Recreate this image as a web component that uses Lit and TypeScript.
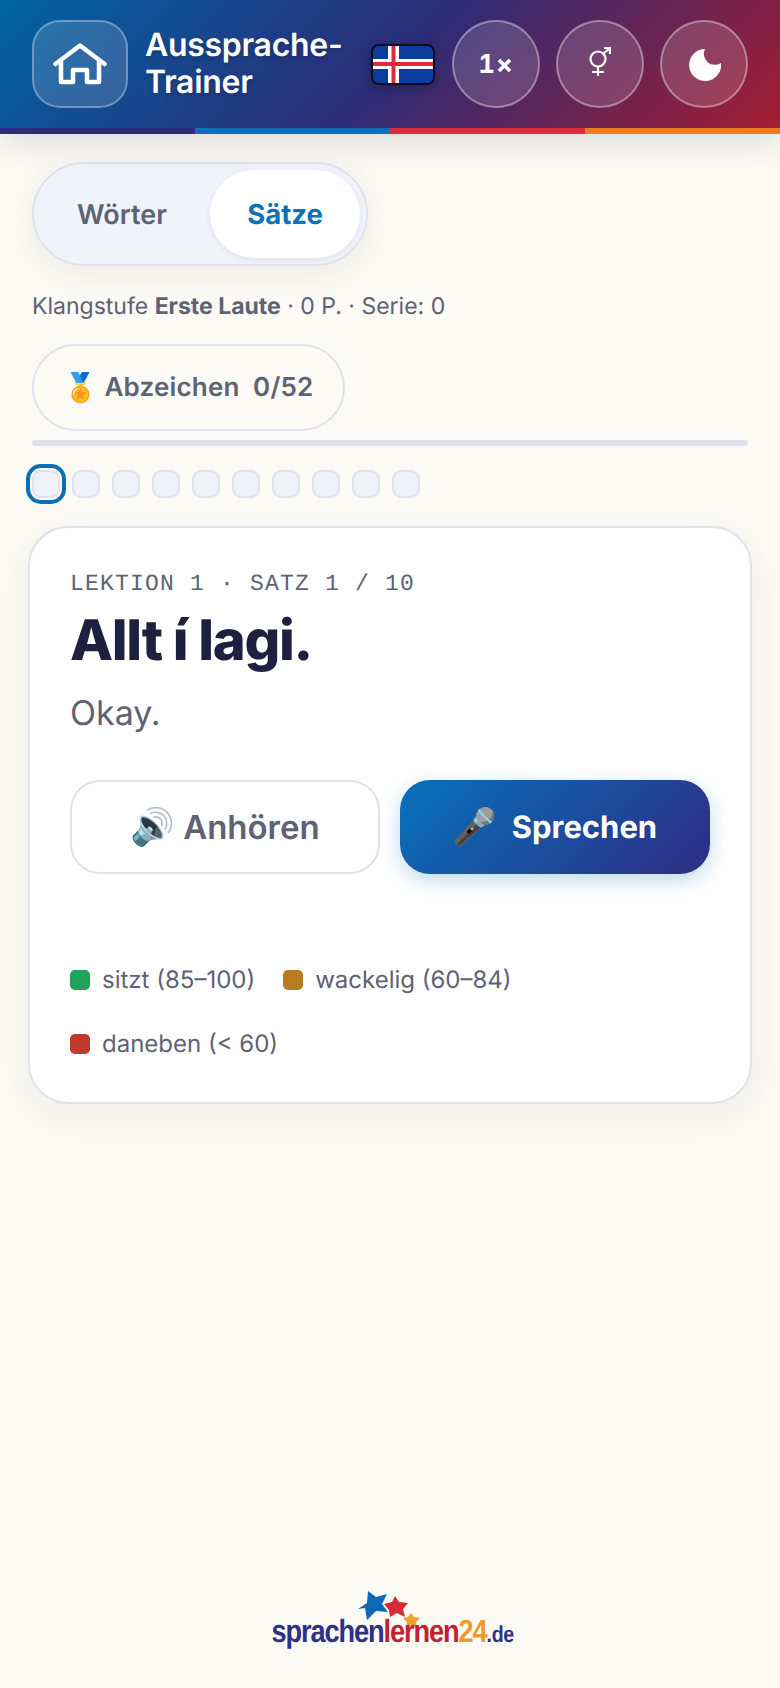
import { LitElement, html, css } from "lit";
import { customElement } from "lit/decorators.js";

@customElement("app-root")
export class AppRoot extends LitElement {
  static styles = css`
    :host { display: flex; flex-direction: column; height: 1688px; overflow: hidden; background: #fbfaf4; font-family: Inter, "Noto Sans", sans-serif; color: #5f6175; text-rendering: geometricPrecision; }
    * { box-sizing: border-box; }
    .head { position: relative; flex: none; height: 134px; padding: 20px 32px 26px; display: flex; align-items: center; background: linear-gradient(135deg, #0064a4 0%, #2c2c77 50%, #a51c30 100%); box-shadow: 0 8px 32px rgba(30,30,60,.14); }
    .stripe { position: absolute; left: 0; right: 0; bottom: 0; height: 6px; display: grid; grid-template-columns: repeat(4, 1fr); }
    .stripe i:nth-child(1) { background: #2e2a80; }
    .stripe i:nth-child(2) { background: #0a6fbd; }
    .stripe i:nth-child(3) { background: #dc2a3f; }
    .stripe i:nth-child(4) { background: #ee7d22; }
    .home { width: 96px; height: 88px; border-radius: 28px; border: 2px solid rgba(255,255,255,.3); background: rgba(255,255,255,.14); display: flex; align-items: center; justify-content: center; flex: none; }
    .title { margin: -2px 0 0 17px; font-size: 32px; line-height: 37px; font-weight: 600; letter-spacing: -.3px; color: #fff; text-shadow: 0 2px 4px rgba(0,0,0,.2); width: 226px; flex: none; }
    .flag { width: 64px; height: 41px; flex: none; margin-right: 17px; border-radius: 8px; border: 2px solid #0b0b1e; overflow: hidden; box-shadow: 0 3px 8px rgba(0,0,0,.25); }
    .flag svg { display: block; width: 100%; height: 100%; }
    .rnds { display: flex; gap: 16px; flex: none; }
    .rnd { width: 88px; height: 88px; border-radius: 50%; flex: none; border: 2px solid rgba(255,255,255,.35); background: rgba(255,255,255,.14); color: #fff; display: flex; align-items: center; justify-content: center; font-weight: 700; font-size: 26px; letter-spacing: 1px; font-variant-numeric: tabular-nums; }
    .rnd .g { margin-bottom: 5px; }
    .rnd .m { margin: 2px 0 0 2px; }
    .main { padding: 28px 32px 0; display: flex; flex-direction: column; align-items: flex-start; }
    .seg { height: 104px; padding: 6px; display: flex; border-radius: 52px; border: 2px solid #e0e1ec; background: #f0f3f9; box-shadow: 0 8px 32px rgba(30,30,60,.07); font-size: 27px; font-weight: 600; }
    .seg div { display: flex; align-items: center; justify-content: center; border-radius: 44px; }
    .seg .w { width: 170px; margin-left: -2px; padding-right: 2px; }
    .seg .s { width: 150px; margin-left: 2px; background: #fff; color: #0a73b8; font-size: 27.5px; font-weight: 700; box-shadow: 0 2px 6px rgba(30,30,60,.08); }
    .stats { margin-top: 24px; font-size: 23px; line-height: 32px; }
    .stats b { font-weight: 700; }
    .badge { margin-top: 22px; width: 313px; height: 87px; border-radius: 44px; border: 2px solid #e0e1ec; display: flex; align-items: center; justify-content: center; gap: 6px; font-size: 26px; font-weight: 600; letter-spacing: .2px; }
    .badge .emo { font-size: 28px; }
    .bar { margin-top: 9px; width: 716px; height: 6px; border-radius: 3px; background: #e0e1ec; }
    .dots { display: flex; align-items: center; gap: 12px; margin-top: 24px; }
    .dot { width: 28px; height: 28px; border-radius: 9px; background: #eff2f9; border: 2px solid #e0e1ec; }
    .dot.on { outline: 4px solid #0a6fb5; outline-offset: 2px; }
    .card { margin: 28px 0 0 -4px; width: 724px; height: 578px; padding: 42px 40px; background: #fff; border: 2px solid #e0e1ec; border-radius: 40px; box-shadow: 0 12px 40px rgba(30,30,60,.06); }
    .lab { font-family: "Liberation Mono", monospace; font-size: 23px; line-height: 28px; letter-spacing: 1.2px; }
    h1 { margin: 8px 0 0; font-size: 56px; line-height: 68px; font-weight: 800; letter-spacing: -1.3px; color: #1f2040; }
    .tr { margin-top: 18px; font-size: 34px; line-height: 44px; }
    .btns { margin-top: 44px; display: flex; gap: 20px; }
    .btn { width: 310px; height: 94px; border-radius: 30px; display: flex; align-items: center; justify-content: center; gap: 8px; font-size: 33px; font-weight: 600; border: 2px solid #e0e1ec; background: #fff; }
    .btn.p { border: 0; gap: 14px; color: #fff; font-weight: 700; font-size: 31px; background: linear-gradient(135deg, #0672bb, #2f2c84); box-shadow: 0 6px 20px rgba(10,115,184,.28); }
    .btn .emo { font-size: 36px; }
    .emo { font-family: "Noto Color Emoji", sans-serif; font-weight: 400; letter-spacing: 0; }
    .legend { margin-top: 90px; display: flex; flex-wrap: wrap; gap: 32px 28px; font-size: 24px; line-height: 32px; }
    .legend span { display: flex; align-items: center; gap: 12px; }
    .legend i { width: 20px; height: 20px; border-radius: 5px; }
    .swg { background: #1fa35a; } .swy { background: #b67c1e; } .swr { background: #c0392b; }
    .foot { margin-top: auto; padding-bottom: 36px; display: flex; justify-content: center; }
    .logo { display: flex; flex-direction: column; align-items: center; }
    .logo svg { display: block; margin: 0 0 -16px 0; }
    .word { font-family: "Liberation Sans", sans-serif; font-weight: 700; font-size: 32px; line-height: 36px; letter-spacing: -1.3px; color: #2e3188; white-space: nowrap; transform: scaleX(.85); margin-left: 6px; }
    .word .r { color: #bf2233; } .word .o { color: #ee9a2c; } .word .d { font-size: 23px; letter-spacing: -.4px; }
  `;

  render() {
    const dots = Array.from({ length: 10 }, (_, i) => i);
    return html`
      <header class="head">
        <div class="home">
          <svg width="54" height="42" viewBox="0 0 54 42" fill="none" stroke="#fff" stroke-width="4.5" stroke-linecap="round" stroke-linejoin="round"><path d="M2.500 21 27 2.500 51.500 21"/><path d="M8 18v21h12V27h14v12h12V18"/></svg>
        </div>
        <div class="title">Aussprache-<br />Trainer</div>
        <div class="flag">
          <svg viewBox="2 2 60 37" preserveAspectRatio="none"><rect width="64" height="41" fill="#0a3d9e"/><rect x="17" width="11" height="41" fill="#fff"/><rect y="15" width="64" height="10" fill="#fff"/><rect x="20.500" width="4" height="41" fill="#dc2a3f"/><rect y="18" width="64" height="4" fill="#dc2a3f"/></svg>
        </div>
        <div class="rnds">
          <div class="rnd">1×</div>
          <div class="rnd">
            <svg class="g" width="22" height="30" viewBox="0 0 22 30" fill="none" stroke="#fff" stroke-width="2.200"><circle cx="9" cy="12" r="7.500"/><path d="M9 19.500V29M3 25h12M14.500 6.500 21 1M15 1h6v6"/></svg>
          </div>
          <div class="rnd">
            <svg class="m" width="32" height="32" viewBox="0 0 32 32"><path fill="#fff" d="M16 0A16 16 0 1 0 32 14 11 11 0 0 1 16 0Z"/></svg>
          </div>
        </div>
        <div class="stripe"><i></i><i></i><i></i><i></i></div>
      </header>
      <main class="main">
        <div class="seg"><div class="w">Wörter</div><div class="s">Sätze</div></div>
        <div class="stats">Klangstufe <b>Erste Laute</b> · 0 P. · Serie: 0</div>
        <div class="badge"><span class="emo">🏅</span><span>Abzeichen&nbsp; 0/52</span></div>
        <div class="bar"></div>
        <div class="dots">${dots.map((i) => html`<div class="dot ${i === 0 ? "on" : ""}"></div>`)}</div>
        <section class="card">
          <div class="lab">LEKTION 1 · SATZ 1 / 10</div>
          <h1>Allt í lagi.</h1>
          <div class="tr">Okay.</div>
          <div class="btns">
            <div class="btn"><span class="emo">🔊</span>Anhören</div>
            <div class="btn p"><span class="emo">🎤</span>Sprechen</div>
          </div>
          <div class="legend">
            <span><i class="swg"></i>sitzt (85–100)</span>
            <span><i class="swy"></i>wackelig (60–84)</span>
            <span><i class="swr"></i>daneben (&lt; 60)</span>
          </div>
        </section>
      </main>
      <footer class="foot">
        <div class="logo">
          <svg width="64" height="38" viewBox="0 0 64 38">
            <path fill="#0f68b3" d="m10 0 8 6 11-3-5 10 6 8-12-1-9 9-2-12L0 18l9-6Z"/>
            <path fill="#d42b36" d="m37 5 4 6 9 1-5 6 2 8-8-4-7 4-1-7-5-6 8-2Z"/>
            <path fill="#f0a22c" d="m53 22 3 4 6 1-4 4 1 6-6-3-5 3 1-6-4-4 5-1Z"/>
          </svg>
          <div class="word">sprachen<span class="r">lernen</span><span class="o">24</span><span class="d">.de</span></div>
        </div>
      </footer>
    `;
  }
}
